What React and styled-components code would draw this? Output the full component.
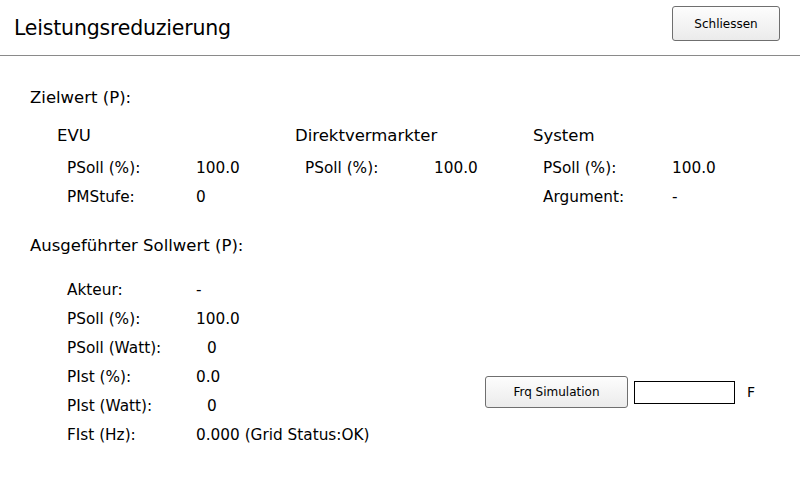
import React from 'react';
import styled, { createGlobalStyle } from 'styled-components';

const GlobalStyle = createGlobalStyle`
  html, body {
    margin: 0;
    padding: 0;
    background: #ffffff;
  }
  body {
    font-family: "DejaVu Sans", "Liberation Sans", sans-serif;
    color: #000;
  }
`;

const Page = styled.div`
  width: 800px;
  height: 480px;
  overflow: hidden;
  background: #fff;
`;

const Header = styled.div`
  height: 55px;
  display: flex;
  align-items: flex-start;
  justify-content: space-between;
  border-bottom: 1px solid #8a8a8a;
  box-sizing: content-box;
`;

const Title = styled.h1`
  margin: 16px 0 0 14px;
  font-size: 20.5px;
  line-height: 24px;
  font-weight: normal;
  letter-spacing: -0.2px;
`;

const Button = styled.button`
  width: ${({ w }) => w}px;
  height: ${({ h }) => h}px;
  border: 1px solid #6f6f6f;
  border-radius: 3px;
  background: linear-gradient(#fdfdfd, #ebebeb);
  font-family: inherit;
  font-size: 12px;
  color: #000;
  padding: 0;
  cursor: pointer;
`;

const CloseButton = styled(Button)`
  margin: 6px 20px 0 0;
`;

const Body = styled.div`
  padding: 32px 0 0 30px;
`;

const SectionTitle = styled.div`
  font-size: 16.5px;
  height: 20px;
  line-height: 20px;
`;

const Columns = styled.div`
  display: grid;
  grid-template-columns: 238px 238px 238px;
  padding: 18px 0 0 27px;
`;

const Column = styled.div`
  display: flex;
  flex-direction: column;
`;

const ColumnTitle = styled.div`
  font-size: 16.5px;
  height: 20px;
  line-height: 20px;
  margin-bottom: 12px;
`;

const Rows = styled.div`
  display: flex;
  flex-direction: column;
  gap: 9px;
  padding-left: 10px;
  width: ${({ w }) => (w ? `${w}px` : 'auto')};
  box-sizing: border-box;
  flex: none;
`;

const Row = styled.div`
  display: flex;
  height: 20px;
  line-height: 20px;
  font-size: 15.3px;
  white-space: nowrap;
`;

const Label = styled.span`
  width: 129px;
  flex: none;
`;

const Value = styled.span`
  padding-left: ${({ indent }) => indent || 0}px;
`;

const Executed = styled.div`
  margin-top: 29px;
`;

const ExecutedBody = styled.div`
  display: flex;
  align-items: flex-end;
  padding: 24px 0 0 27px;
`;

const Simulation = styled.div`
  display: flex;
  align-items: center;
  margin-bottom: 37px;
`;

const FreqInput = styled.input`
  width: 101px;
  height: 23px;
  box-sizing: border-box;
  border: 1px solid #000;
  margin-left: 6px;
  font-family: inherit;
  outline: none;
`;

const Unit = styled.span`
  font-size: 14px;
  margin-left: 12px;
`;

const targets = [
  {
    name: 'EVU',
    rows: [
      ['PSoll (%):', '100.0'],
      ['PMStufe:', '0'],
    ],
  },
  {
    name: 'Direktvermarkter',
    rows: [['PSoll (%):', '100.0']],
  },
  {
    name: 'System',
    rows: [
      ['PSoll (%):', '100.0'],
      ['Argument:', '-'],
    ],
  },
];

const executed = [
  ['Akteur:', '-'],
  ['PSoll (%):', '100.0'],
  ['PSoll (Watt):', '0', 11],
  ['PIst (%):', '0.0'],
  ['PIst (Watt):', '0', 11],
  ['FIst (Hz):', '0.000 (Grid Status:OK)'],
];

const App = () => {
  return (
    <Page>
      <GlobalStyle />
      <Header>
        <Title>Leistungsreduzierung</Title>
        <CloseButton w={108} h={35}>Schliessen</CloseButton>
      </Header>
      <Body>
        <SectionTitle>Zielwert (P):</SectionTitle>
        <Columns>
          {targets.map((col) => (
            <Column key={col.name}>
              <ColumnTitle>{col.name}</ColumnTitle>
              <Rows>
                {col.rows.map(([label, value]) => (
                  <Row key={label}>
                    <Label>{label}</Label>
                    <Value>{value}</Value>
                  </Row>
                ))}
              </Rows>
            </Column>
          ))}
        </Columns>
        <Executed>
          <SectionTitle>Ausgeführter Sollwert (P):</SectionTitle>
          <ExecutedBody>
            <Rows w={428}>
              {executed.map(([label, value, indent]) => (
                <Row key={label}>
                  <Label>{label}</Label>
                  <Value indent={indent}>{value}</Value>
                </Row>
              ))}
            </Rows>
            <Simulation>
              <Button w={143} h={32}>Frq Simulation</Button>
              <FreqInput type="text" />
              <Unit>F</Unit>
            </Simulation>
          </ExecutedBody>
        </Executed>
      </Body>
    </Page>
  );
};

export default App;
